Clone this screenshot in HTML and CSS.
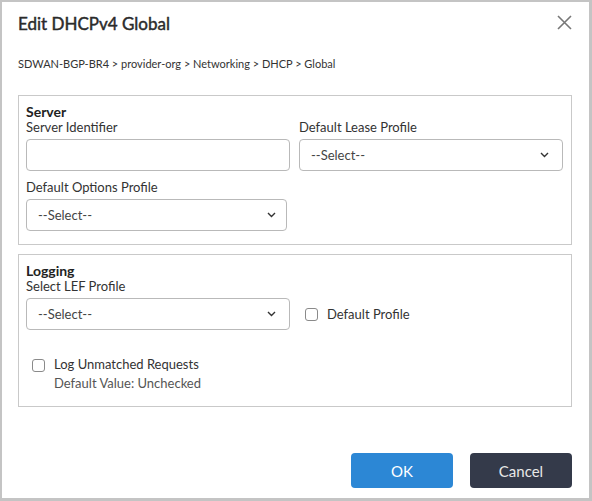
FILE: index.html
```html
<!DOCTYPE html>
<html>
<head>
<meta charset="utf-8">
<link rel="stylesheet" href="styles.css">
</head>
<body>
<div class="dialog">
  <div class="header">
    <h1 class="title">Edit DHCPv4 Global</h1>
    <svg class="close" width="15" height="15" viewBox="0 0 15 15"><path d="M1 1 L14 14 M14 1 L1 14" stroke="#777" stroke-width="1.6" fill="none"/></svg>
  </div>
  <div class="crumbs">SDWAN-BGP-BR4 &gt; provider-org &gt; Networking &gt; DHCP &gt; Global</div>

  <div class="section">
    <div class="sec-title">Server</div>
    <div class="grid">
      <div class="field">
        <label class="label">Server Identifier</label>
        <div class="input"></div>
      </div>
      <div class="field">
        <label class="label">Default Lease Profile</label>
        <div class="select"><span>--Select--</span><svg width="9" height="6" viewBox="0 0 9 6"><path d="M1 1 L4.5 4.5 L8 1" stroke="#333" stroke-width="1.4" fill="none"/></svg></div>
      </div>
      <div class="field">
        <label class="label">Default Options Profile</label>
        <div class="select narrow"><span>--Select--</span><svg width="9" height="6" viewBox="0 0 9 6"><path d="M1 1 L4.5 4.5 L8 1" stroke="#333" stroke-width="1.4" fill="none"/></svg></div>
      </div>
    </div>
  </div>

  <div class="section logging">
    <div class="sec-title">Logging</div>
    <label class="label">Select LEF Profile</label>
    <div class="lef-row">
      <div class="select"><span>--Select--</span><svg width="9" height="6" viewBox="0 0 9 6"><path d="M1 1 L4.5 4.5 L8 1" stroke="#333" stroke-width="1.4" fill="none"/></svg></div>
      <div class="check-item">
        <span class="box"></span>
        <span class="check-text">Default Profile</span>
      </div>
    </div>
    <div class="log-row">
      <span class="box log-box"></span>
      <div class="log-text">
        <div class="log-label">Log Unmatched Requests</div>
        <div class="log-hint">Default Value: Unchecked</div>
      </div>
    </div>
  </div>

  <div class="footer">
    <button class="btn ok">OK</button>
    <button class="btn cancel">Cancel</button>
  </div>
</div>
</body>
</html>
```

FILE: styles.css
```css
html, body {
  margin: 0;
  padding: 0;
}
body {
  background: #c4c4c4;
  font-family: Lato, "Noto Sans", sans-serif;
  color: #333;
  width: 592px;
  height: 501px;
  overflow: hidden;
}
.dialog {
  margin: 2px 3px 3px 2px;
  width: 587px;
  height: 496px;
  box-sizing: border-box;
  background: #fff;
  padding: 11px 17px 10px 16px;
  display: flex;
  flex-direction: column;
}
.header {
  display: flex;
  justify-content: space-between;
  align-items: flex-start;
}
.title {
  margin: 0;
  font-size: 17px;
  line-height: 22px;
  font-weight: 400;
  -webkit-text-stroke: 0.45px #2b2b2b;
  color: #2b2b2b;
}
.close {
  margin-top: 2px;
  margin-right: 0;
}
.crumbs {
  margin-top: 22px;
  font-size: 11px;
  line-height: 14px;
  color: #333;
}
.section {
  margin-top: 24px;
  border: 1px solid #c9c9c9;
  padding: 8px 8px 13px 7px;
}
.section.logging {
  margin-top: 9px;
  padding-bottom: 15px;
}
.sec-title {
  font-size: 14px;
  line-height: 16px;
  font-weight: 700;
  color: #222;
}
.grid {
  display: grid;
  grid-template-columns: 264px 264px;
  column-gap: 9px;
  row-gap: 9px;
}
.field {
  display: flex;
  flex-direction: column;
}
.label {
  display: block;
  font-size: 13px;
  line-height: 15px;
  color: #333;
  margin-bottom: 4px;
}
.input, .select {
  height: 32px;
  box-sizing: border-box;
  border: 1px solid #b9b9b9;
  border-radius: 4px;
  background: #fff;
}
.select {
  width: 264px;
  display: flex;
  align-items: center;
  justify-content: space-between;
  padding: 0 13px 0 11px;
  font-size: 13px;
  color: #444;
}
.select svg {
  display: block;
}
.select.narrow {
  width: 261px;
  padding-right: 10px;
}
.lef-row {
  display: flex;
  align-items: center;
  gap: 15px;
}
.check-item {
  display: flex;
  align-items: center;
  gap: 9px;
}
.box {
  display: inline-block;
  width: 13px;
  height: 13px;
  box-sizing: border-box;
  border: 1px solid #8a8a8a;
  border-radius: 3px;
  background: #fff;
  flex: none;
}
.check-text {
  font-size: 13px;
  line-height: 16px;
  color: #333;
}
.log-row {
  display: flex;
  align-items: flex-start;
  gap: 9px;
  margin-top: 26px;
  padding-left: 6px;
}
.log-box {
  margin-top: 3px;
}
.log-label {
  font-size: 13px;
  line-height: 16px;
  color: #333;
}
.log-hint {
  margin-top: 3px;
  font-size: 13px;
  line-height: 16px;
  color: #555;
}
.footer {
  margin-top: auto;
  display: flex;
  justify-content: flex-end;
  gap: 17px;
}
.btn {
  width: 102px;
  height: 35px;
  border: none;
  border-radius: 4px;
  font-family: Lato, "Noto Sans", sans-serif;
  font-size: 15px;
  color: #fff;
  padding: 0;
}
.btn.ok {
  background: #2c87d5;
}
.btn.cancel {
  background: #343a4a;
  color: #e8e8e8;
}
```
